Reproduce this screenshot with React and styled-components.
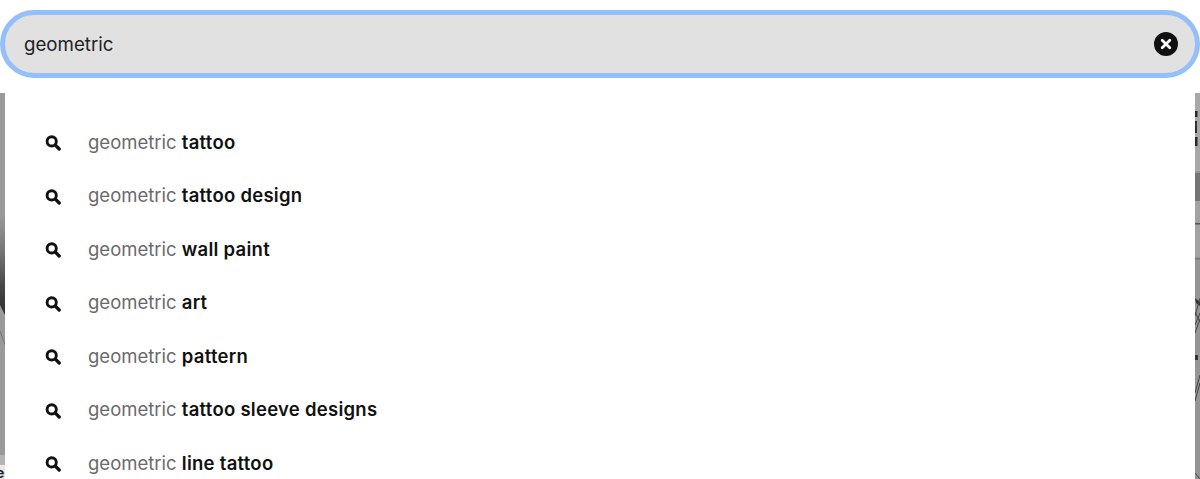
import React from 'react';
import styled, { createGlobalStyle } from 'styled-components';

const GlobalStyle = createGlobalStyle`
  html, body {
    margin: 0;
    padding: 0;
    background: #fff;
    overflow: hidden;
  }
  body {
    font-family: Inter, "Liberation Sans", sans-serif;
  }
`;

const Page = styled.div`
  width: 1200px;
  height: 479px;
  overflow: hidden;
  background: #fff;
  padding-top: 10px;
  box-sizing: border-box;
`;

const SearchBar = styled.div`
  height: 68px;
  box-sizing: border-box;
  border: 5px solid #94bffb;
  border-radius: 34px;
  background: #e1e1e1;
  display: flex;
  align-items: center;
  justify-content: space-between;
  padding: 0 17px 0 19px;
`;

const Query = styled.span`
  font-size: 18.7px;
  color: #222;
`;

const Results = styled.div`
  display: flex;
  margin-top: 15px;
  height: 386px;
`;

const Strip = styled.svg`
  flex: 0 0 5px;
  display: block;
`;

const Panel = styled.ul`
  flex: 1;
  margin: 0;
  padding: 22px 0 0;
  list-style: none;
  background: #fff;
`;

const Row = styled.li`
  height: 53.5px;
  display: flex;
  align-items: center;
  padding-left: 40px;
  font-size: 18.5px;
`;

const IconWrap = styled.span`
  display: flex;
  width: 43px;
  padding-top: 3px;
`;

const Muted = styled.span`
  color: #6a6a6a;
  white-space: pre;
`;

const Bold = styled.span`
  color: #111;
  font-weight: 600;
  letter-spacing: 0.27px;
`;

const SearchIcon = () => (
  <svg width="16" height="16" viewBox="0 0 16 16" fill="none">
    <circle cx="6.7" cy="6.4" r="4.6" stroke="#111" strokeWidth="2.9" />
    <path d="M10.4 10.2 L14.2 14" stroke="#111" strokeWidth="3.3" strokeLinecap="round" />
  </svg>
);

const ClearIcon = () => (
  <svg width="24" height="24" viewBox="0 0 24 24">
    <circle cx="12" cy="12" r="12" fill="#111" />
    <path d="M8.2 8.2 L15.8 15.8 M15.8 8.2 L8.2 15.8" stroke="#fff" strokeWidth="2.8" strokeLinecap="round" />
  </svg>
);

// cropped photo edge showing behind the panel, left side
const LeftEdge = () => (
  <Strip width="5" height="386" viewBox="0 0 5 386">
    <defs>
      <linearGradient id="leftDark" x1="0" y1="0" x2="0" y2="1">
        <stop offset="0" stopColor="#9a9a9a" />
        <stop offset="0.35" stopColor="#777" />
        <stop offset="0.7" stopColor="#484848" />
        <stop offset="1" stopColor="#2e2e2e" />
      </linearGradient>
    </defs>
    <rect width="5" height="386" fill="#9a9a9a" />
    <path d="M0 122 H5 V222 L0 212 Z" fill="url(#leftDark)" />
    <path d="M0 238 L5 252" stroke="#777" strokeWidth="1" />
    <rect y="362" width="5" height="10" fill="#b4b4b4" />
    <rect y="372" width="5" height="14" fill="#e9e9e9" />
    <text x="-4" y="385" fontSize="14" fontWeight="700" fill="#222" fontFamily="Inter, sans-serif">e</text>
  </Strip>
);

const rightLines = [
  'M0 30 L2 34',
  'M0 223 L5 205',
  'M0 219 L5 229',
  'M0 232 L5 220',
  'M0 240 L5 226',
  'M0 300 L5 282',
  'M0 308 L5 290',
  'M0 380 L5 386',
];

// same photo edge, right side
const RightEdge = () => (
  <Strip width="5" height="386" viewBox="0 0 5 386">
    <rect width="5" height="386" fill="#959595" />
    <rect y="0" width="5" height="78" fill="#a8a8a8" />
    <rect y="80" width="5" height="28" fill="#767676" />
    <rect y="108" width="5" height="56" fill="#a2a2a2" />
    <rect y="130" width="5" height="1.5" fill="#555" />
    <rect y="165" width="5" height="1.5" fill="#777" />
    <path d="M0 18 H2.5 V24 H0 Z M0 28 H2 V40 H0 Z M0 44 H2.5 V53 H0 Z" fill="#2a2a2a" />
    <path d="M0 205 L5 209 V213 L1 210 Z" fill="#333" />
    <path d="M0 262 H3 V267 H0 Z" fill="#333" />
    {rightLines.map((d) => (
      <path key={d} d={d} stroke="#444" strokeWidth="1" fill="none" />
    ))}
  </Strip>
);

const suggestions = [
  'tattoo',
  'tattoo design',
  'wall paint',
  'art',
  'pattern',
  'tattoo sleeve designs',
  'line tattoo',
];

export default function App() {
  return (
    <Page>
      <GlobalStyle />
      <SearchBar>
        <Query>geometric</Query>
        <ClearIcon />
      </SearchBar>
      <Results>
        <LeftEdge />
        <Panel>
          {suggestions.map((s) => (
            <Row key={s}>
              <IconWrap>
                <SearchIcon />
              </IconWrap>
              <Muted>geometric </Muted>
              <Bold>{s}</Bold>
            </Row>
          ))}
        </Panel>
        <RightEdge />
      </Results>
    </Page>
  );
}
